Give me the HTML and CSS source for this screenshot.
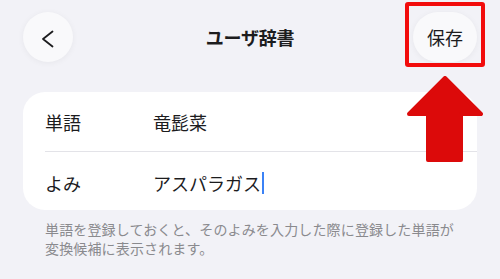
FILE: index.html
```html
<!DOCTYPE html>
<html lang="ja">
<head>
<meta charset="utf-8">
<title>ユーザ辞書</title>
<link rel="stylesheet" href="styles.css">
</head>
<body>
<div class="screen">
  <header class="nav">
    <button class="back" aria-label="戻る">
      <svg width="50" height="50" viewBox="0 0 50 50"><polyline points="29.5,19.5 20,27 29.5,34.5" fill="none" stroke="#1c1c1e" stroke-width="1.8" stroke-linecap="round" stroke-linejoin="round"/></svg>
    </button>
    <h1 class="title">ユーザ辞書</h1>
    <button class="save">保存</button>
  </header>

  <section class="card">
    <div class="row">
      <span class="label">単語</span>
      <span class="value">竜髭菜</span>
    </div>
    <div class="row">
      <span class="label">よみ</span>
      <span class="value">アスパラガス<span class="caret"></span></span>
    </div>
  </section>

  <p class="note">単語を登録しておくと、そのよみを入力した際に登録した単語が変換候補に表示されます。</p>

  <div class="highlight"></div>
  <svg class="arrow" width="76" height="86" viewBox="0 0 76 86">
    <path d="M38 2 L74 38 L54 38 L54 84 L21 84 L21 38 L2 38 Z" fill="#dc0a0a" stroke="#dc0a0a" stroke-width="4" stroke-linejoin="round"/>
  </svg>
</div>
</body>
</html>
```
FILE: styles.css
```css
* { box-sizing: border-box; }
html, body {
  margin: 0;
  padding: 0;
  background: #f2f2f7;
}
body {
  font-family: "Noto Sans CJK JP", "Noto Sans", sans-serif;
  color: #1c1c1e;
}
.screen {
  position: relative;
  width: 500px;
  height: 279px;
  overflow: hidden;
}
.nav {
  display: grid;
  grid-template-columns: 1fr auto 1fr;
  align-items: center;
  padding: 12px 23px 0 23px;
  height: 62px;
}
.back {
  width: 50px;
  height: 50px;
  padding: 0;
  border: none;
  border-radius: 50%;
  background: #f9f9fb;
  box-shadow: 0 1px 6px rgba(0, 0, 0, 0.05);
  display: flex;
  align-items: center;
  justify-content: center;
}
.back svg { display: block; }
.title {
  margin: 0;
  font-size: 18px;
  font-weight: 700;
  line-height: 50px;
  letter-spacing: -0.2px;
}
.save {
  justify-self: end;
  width: 64px;
  height: 50px;
  border: none;
  border-radius: 25px;
  background: #f9f9fb;
  box-shadow: 0 1px 6px rgba(0, 0, 0, 0.05);
  font-family: inherit;
  font-size: 18px;
  color: #1c1c1e;
  padding: 0;
}
.card {
  margin: 30px 23px 0 23px;
  background: #ffffff;
  border-radius: 22px;
  padding-left: 22px;
}
.row {
  display: flex;
  align-items: center;
  height: 59px;
  font-size: 18px;
}
.row + .row {
  border-top: 1px solid #e3e3e8;
  padding-top: 3px;
}
.label {
  width: 108px;
  flex: none;
}
.value {
  display: flex;
  align-items: center;
}
.caret {
  display: inline-block;
  width: 2px;
  height: 22px;
  background: #3b82f6;
  margin-left: 1px;
}
.note {
  margin: 10px 45px 0 45px;
  font-size: 14px;
  line-height: 19px;
  letter-spacing: 0.15px;
  color: #8a8a8e;
}
.highlight {
  position: absolute;
  left: 405px;
  top: 2px;
  width: 80px;
  height: 65px;
  border: 4px solid #f20c0c;
  border-radius: 3px;
}
.arrow {
  position: absolute;
  left: 407px;
  top: 76px;
}
```
